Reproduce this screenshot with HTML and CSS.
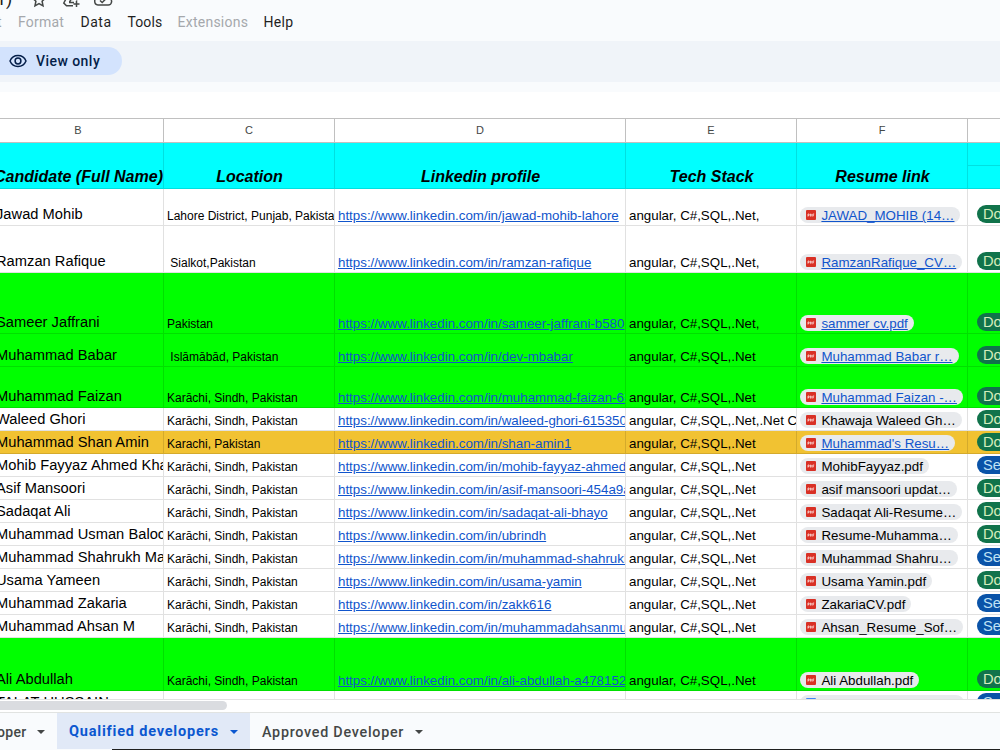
FILE: index.html
```html
<!DOCTYPE html>
<html lang="en">
	<head>
		<meta charset="utf-8">
		<meta name="viewport" content="width=device-width, initial-scale=1.0">
		<title>Qualified developers</title>
		<link rel="stylesheet" href="styles.css">
	</head>
	<body>
		<!-- icons shared by the rows -->
		<svg class="defs" width="0" height="0">
			<symbol id="pdf" viewBox="0 0 10 10">
				<rect width="10" height="10" rx="1" fill="#d93025"/>
				<path d="M2 6.6V4h1.1v1.4H2M4.4 4v2.2h.8V4zM6.8 6.6V4h1.4M6.8 5.2H8" fill="none" stroke="#fbdcd9" stroke-width=".8"/>
			</symbol>
			<symbol id="doc" viewBox="0 0 10 10">
				<rect width="10" height="10" rx="1" fill="#4285f4"/>
				<path d="M2 3h6M2 5h6M2 7h4" stroke="#fff" stroke-width="1"/>
			</symbol>
		</svg>

		<div class="titlebar">
			<span class="doc-name">1)</span>
			<svg class="star" width="16" height="16" viewBox="0 0 16 16"><path d="M8 1.6l1.9 4.1 4.5.5-3.3 3 .9 4.6L8 11.5l-4 2.3.9-4.6-3.3-3 4.5-.5z"/></svg>
			<svg class="move" width="20" height="16" viewBox="0 0 20 16"><path d="M11 12.7H4.5L1.8 10 6 2h6l3 5.5M7.5 9l2.5-4 1 2M7 9.5h5M14.5 8v6M11.5 11h6"/></svg>
			<svg class="cloud" width="20" height="16" viewBox="0 0 20 16"><path d="M5 13h10a3.4 3.4 0 0 0 .4-6.8A5.6 5.6 0 0 0 5 5.3 3.9 3.9 0 0 0 5 13zM7 8.5l2.2 2 4-4"/></svg>
		</div>
		<div class="menubar">
			<span class="off cut">t</span>
			<span class="off format">Format</span>
			<span class="data">Data</span>
			<span class="tools">Tools</span>
			<span class="off extensions">Extensions</span>
			<span class="help">Help</span>
		</div>
		<div class="toolbar">
			<div class="view-only">
				<svg width="18" height="14" viewBox="0 0 18 14"><path d="M1 7C2.5 3.500 5.500 1.500 9 1.500S15.500 3.500 17 7c-1.500 3.500-4.500 5.500-8 5.500S2.500 10.500 1 7z"/><circle cx="9" cy="7" r="2.900"/></svg>
				<span>View only</span>
			</div>
		</div>
		<div class="formula"></div>

		<div class="sheet">
			<div class="row letters">
				<div>B</div><div>C</div><div>D</div><div>E</div><div>F</div><div></div>
			</div>
			<div class="row heading">
				<div>Candidate (Full Name)</div><div>Location</div><div>Linkedin profile</div><div>Tech Stack</div><div>Resume link</div>
				<div class="split"><span></span></div>
			</div>
			<div class="row h37">
				<div class="name">Jawad Mohib</div>
				<div class="place">Lahore District, Punjab, Pakistan</div>
				<div class="link"><a>https://www.linkedin.com/in/jawad-mohib-lahore</a></div>
				<div class="tech">angular, C#,SQL,.Net,</div>
				<div class="resume"><span class="chip"><svg><use href="#pdf"/></svg><a>JAWAD_MOHIB (14…</a></span></div>
				<div class="status"><span class="done">Done</span></div>
			</div>
			<div class="row h47">
				<div class="name">Ramzan Rafique</div>
				<div class="place">&nbsp;Sialkot,Pakistan</div>
				<div class="link"><a>https://www.linkedin.com/in/ramzan-rafique</a></div>
				<div class="tech">angular, C#,SQL,.Net,</div>
				<div class="resume"><span class="chip"><svg><use href="#pdf"/></svg><a>RamzanRafique_CV…</a></span></div>
				<div class="status"><span class="done">Done</span></div>
			</div>
			<div class="row green h61">
				<div class="name">Sameer Jaffrani</div>
				<div class="place">Pakistan</div>
				<div class="link"><a>https://www.linkedin.com/in/sameer-jaffrani-b580</a></div>
				<div class="tech">angular, C#,SQL,.Net,</div>
				<div class="resume"><span class="chip"><svg><use href="#pdf"/></svg><a>sammer cv.pdf</a></span></div>
				<div class="status"><span class="done">Done</span></div>
			</div>
			<div class="row green h33">
				<div class="name">Muhammad Babar</div>
				<div class="place">&nbsp;Islāmābād, Pakistan</div>
				<div class="link"><a>https://www.linkedin.com/in/dev-mbabar</a></div>
				<div class="tech">angular, C#,SQL,.Net</div>
				<div class="resume"><span class="chip"><svg><use href="#pdf"/></svg><a>Muhammad Babar r…</a></span></div>
				<div class="status"><span class="done">Done</span></div>
			</div>
			<div class="row green h41">
				<div class="name">Muhammad Faizan</div>
				<div class="place">Karāchi, Sindh, Pakistan</div>
				<div class="link"><a>https://www.linkedin.com/in/muhammad-faizan-68</a></div>
				<div class="tech">angular, C#,SQL,.Net</div>
				<div class="resume"><span class="chip"><svg><use href="#pdf"/></svg><a>Muhammad Faizan -…</a></span></div>
				<div class="status"><span class="done">Done</span></div>
			</div>
			<div class="row">
				<div class="name">Waleed Ghori</div>
				<div class="place">Karāchi, Sindh, Pakistan</div>
				<div class="link"><a>https://www.linkedin.com/in/waleed-ghori-615350</a></div>
				<div class="tech">angular, C#,SQL,.Net,.Net Core</div>
				<div class="resume"><span class="chip"><svg><use href="#pdf"/></svg>Khawaja Waleed Gh…</span></div>
				<div class="status"><span class="done">Done</span></div>
			</div>
			<div class="row amber">
				<div class="name">Muhammad Shan Amin</div>
				<div class="place">Karachi, Pakistan</div>
				<div class="link"><a>https://www.linkedin.com/in/shan-amin1</a></div>
				<div class="tech">angular, C#,SQL,.Net</div>
				<div class="resume"><span class="chip"><svg><use href="#pdf"/></svg><a>Muhammad's Resu…</a></span></div>
				<div class="status"><span class="done">Done</span></div>
			</div>
			<div class="row">
				<div class="name">Mohib Fayyaz Ahmed Khan</div>
				<div class="place">Karāchi, Sindh, Pakistan</div>
				<div class="link"><a>https://www.linkedin.com/in/mohib-fayyaz-ahmed</a></div>
				<div class="tech">angular, C#,SQL,.Net</div>
				<div class="resume"><span class="chip"><svg><use href="#pdf"/></svg>MohibFayyaz.pdf</span></div>
				<div class="status"><span class="sent">Sent</span></div>
			</div>
			<div class="row">
				<div class="name">Asif Mansoori</div>
				<div class="place">Karāchi, Sindh, Pakistan</div>
				<div class="link"><a>https://www.linkedin.com/in/asif-mansoori-454a9a</a></div>
				<div class="tech">angular, C#,SQL,.Net</div>
				<div class="resume"><span class="chip"><svg><use href="#pdf"/></svg>asif mansoori updat…</span></div>
				<div class="status"><span class="done">Done</span></div>
			</div>
			<div class="row">
				<div class="name">Sadaqat Ali</div>
				<div class="place">Karāchi, Sindh, Pakistan</div>
				<div class="link"><a>https://www.linkedin.com/in/sadaqat-ali-bhayo</a></div>
				<div class="tech">angular, C#,SQL,.Net</div>
				<div class="resume"><span class="chip"><svg><use href="#pdf"/></svg>Sadaqat Ali-Resume…</span></div>
				<div class="status"><span class="done">Done</span></div>
			</div>
			<div class="row">
				<div class="name">Muhammad Usman Baloch</div>
				<div class="place">Karāchi, Sindh, Pakistan</div>
				<div class="link"><a>https://www.linkedin.com/in/ubrindh</a></div>
				<div class="tech">angular, C#,SQL,.Net</div>
				<div class="resume"><span class="chip"><svg><use href="#pdf"/></svg>Resume-Muhamma…</span></div>
				<div class="status"><span class="done">Done</span></div>
			</div>
			<div class="row">
				<div class="name">Muhammad Shahrukh Malik</div>
				<div class="place">Karāchi, Sindh, Pakistan</div>
				<div class="link"><a>https://www.linkedin.com/in/muhammad-shahrukh</a></div>
				<div class="tech">angular, C#,SQL,.Net</div>
				<div class="resume"><span class="chip"><svg><use href="#pdf"/></svg>Muhammad Shahru…</span></div>
				<div class="status"><span class="sent">Sent</span></div>
			</div>
			<div class="row">
				<div class="name">Usama Yameen</div>
				<div class="place">Karāchi, Sindh, Pakistan</div>
				<div class="link"><a>https://www.linkedin.com/in/usama-yamin</a></div>
				<div class="tech">angular, C#,SQL,.Net</div>
				<div class="resume"><span class="chip"><svg><use href="#pdf"/></svg>Usama Yamin.pdf</span></div>
				<div class="status"><span class="done">Done</span></div>
			</div>
			<div class="row">
				<div class="name">Muhammad Zakaria</div>
				<div class="place">Karāchi, Sindh, Pakistan</div>
				<div class="link"><a>https://www.linkedin.com/in/zakk616</a></div>
				<div class="tech">angular, C#,SQL,.Net</div>
				<div class="resume"><span class="chip"><svg><use href="#pdf"/></svg>ZakariaCV.pdf</span></div>
				<div class="status"><span class="sent">Sent</span></div>
			</div>
			<div class="row">
				<div class="name">Muhammad Ahsan M</div>
				<div class="place">Karāchi, Sindh, Pakistan</div>
				<div class="link"><a>https://www.linkedin.com/in/muhammadahsanmu</a></div>
				<div class="tech">angular, C#,SQL,.Net</div>
				<div class="resume"><span class="chip"><svg><use href="#pdf"/></svg>Ahsan_Resume_Sof…</span></div>
				<div class="status"><span class="sent">Sent</span></div>
			</div>
			<div class="row green h53">
				<div class="name">Ali Abdullah</div>
				<div class="place">Karāchi, Sindh, Pakistan</div>
				<div class="link"><a>https://www.linkedin.com/in/ali-abdullah-a478152</a></div>
				<div class="tech">angular, C#,SQL,.Net</div>
				<div class="resume"><span class="chip"><svg><use href="#pdf"/></svg>Ali Abdullah.pdf</span></div>
				<div class="status"><span class="done">Done</span></div>
			</div>
			<div class="row">
				<div class="name">TALAT HUSSAIN</div>
				<div class="place"></div>
				<div class="link"><a>https://www.linkedin.com/in/talat-hussain-241877</a></div>
				<div class="tech">angular, C#,SQL,.Net</div>
				<div class="resume"><span class="chip"><svg><use href="#doc"/></svg>Resume of Talat Hus…</span></div>
				<div class="status"><span class="sent">Sent</span></div>
			</div>
		</div>

		<div class="scroll"><div class="thumb"></div></div>

		<div class="tabs">
			<div class="tab first"><span>oper</span><i></i></div>
			<div class="tab active"><span>Qualified developers</span><i></i></div>
			<div class="tab last"><span>Approved Developer</span><i></i></div>
		</div>
		<div class="edge"></div>
	</body>
</html>
```
FILE: styles.css
```css
* {
	margin: 0;
	padding: 0;
	box-sizing: border-box;
}
body {
	width: 1000px;
	height: 750px;
	overflow: hidden;
	background-color: #f9fbfd;
	font-family: "Liberation Sans", Arial, sans-serif;
	color: #000;
}
.defs {
	position: absolute;
}

/* top bars */
.titlebar {
	display: flex;
	height: 10px;
	overflow: hidden;
	font-family: Roboto, sans-serif;
}
.titlebar svg {
	flex: none;
	margin-top: -8px;
	fill: none;
	stroke: #444746;
	stroke-width: 1.5;
}
.doc-name {
	width: 31px;
	margin-left: -4px;
	margin-top: -11px;
	font-size: 18px;
	line-height: 20px;
	color: #1f1f1f;
}
.titlebar .star {
	margin-left: 4px;
}
.titlebar .move {
	margin-left: 15px;
	margin-top: -7px;
}
.titlebar .cloud {
	margin-left: 11px;
}
.menubar {
	display: flex;
	height: 31px;
	font-family: Roboto, sans-serif;
	font-size: 14px;
	line-height: 25px;
	color: #1f1f1f;
	white-space: nowrap;
}
.menubar span {
	flex: none;
}
.menubar .off {
	color: #a5a8ac;
}
.menubar .cut {
	width: 21px;
	margin-left: -3px;
}
.format {
	width: 62.5px;
	letter-spacing: 0.2px;
}
.data {
	width: 47px;
	letter-spacing: 0.5px;
}
.tools {
	width: 50px;
	letter-spacing: 0.1px;
}
.extensions {
	width: 86px;
	letter-spacing: 0.25px;
}
.help {
	letter-spacing: 0.3px;
}
.toolbar {
	height: 41px;
	padding-top: 6px;
	background-color: #f0f4f9;
}
.view-only {
	display: flex;
	align-items: center;
	gap: 9px;
	width: 136px;
	height: 28px;
	margin-left: -14px;
	padding-left: 23px;
	border-radius: 14px;
	background-color: #d3e3fd;
	color: #041e49;
	font: 500 14px/28px Roboto, sans-serif;
	letter-spacing: 0.45px;
}
.view-only svg {
	fill: none;
	stroke: #041e49;
	stroke-width: 1.5;
}
.formula {
	height: 36px;
	border-top: 10px solid #f9fbfd;
	background-color: #fff;
}

/* grid */
.sheet {
	height: 581px;
	overflow: hidden;
	border-top: 1px solid #c0c0c0;
	background-color: #fff;
}
.row {
	display: grid;
	grid-template-columns: 171px 171px 291px 171px 171px 171px;
	width: 1146px;
	height: 23px;
	margin-left: -7px;
}
.row > div {
	display: flex;
	align-items: flex-end;
	min-width: 0;
	overflow: hidden;
	border-right: 1px solid #e1e1e1;
	border-bottom: 1px solid #e1e1e1;
	white-space: nowrap;
}
.row.letters {
	height: 24px;
}
.letters > div {
	align-items: center;
	justify-content: center;
	padding: 0 0 2px 0;
	border-color: #c0c0c0;
	font-size: 11px;
	color: #444746;
}
.row.heading {
	height: 46px;
}
.heading > div {
	justify-content: center;
	border-color: #00e0e0;
	background-color: #00ffff;
	font-size: 16px;
	font-weight: bold;
	font-style: italic;
	line-height: 18px;
	padding: 0 0 2px 1px;
}
.heading > .split {
	display: block;
	padding: 0;
}
.split span {
	display: block;
	height: 23px;
	border-bottom: 1px solid #00e0e0;
}
.h37 { height: 37px; }
.h47 { height: 47px; }
.h61 { height: 61px; }
.h33 { height: 33px; }
.h41 { height: 41px; }
.h53 { height: 53px; }
.green > div {
	background-color: #00ff00;
	border-color: #00e000;
}
.amber > div {
	background-color: #f1c232;
	border-color: #d4aa2c;
}
.name {
	padding: 0 0 2px 3px;
	font-size: 14.67px;
	line-height: 17px;
	letter-spacing: 0.03px;
}
.place {
	padding: 0 0 2px 3px;
	font-size: 12px;
	line-height: 14px;
}
.link,
.tech {
	padding: 0 0 1px 3px;
	font-size: 13.33px;
	line-height: 16px;
}
.row a {
	color: #1155cc;
	text-decoration: underline;
}
.resume {
	padding: 0 0 2px 3px;
}
.chip {
	display: flex;
	align-items: flex-start;
	height: 16px;
	padding: 1px 6px 0 6px;
	border-radius: 8px;
	background-color: #e8eaed;
	font-size: 13.33px;
	line-height: 16px;
}
.chip svg {
	width: 10px;
	height: 10px;
	margin-top: 2px;
	margin-right: 5.4px;
}
.status {
	padding: 0 0 2px 9px;
}
.status span {
	height: 18px;
	padding: 0 6px;
	border-radius: 9px;
	font-size: 14.67px;
	line-height: 18px;
}
.done {
	background-color: #11734b;
	color: #d4edbc;
}
.sent {
	background-color: #0a53a8;
	color: #bfe1f6;
}

/* bottom */
.scroll {
	height: 14px;
	padding-top: 1px;
	border-top: 1px solid #e1e1e1;
	border-bottom: 1px solid #e1e3e1;
	background-color: #fff;
}
.thumb {
	width: 237px;
	height: 9px;
	margin-left: -10px;
	border-radius: 5px;
	background-color: #dadce0;
}
.tabs {
	display: flex;
	height: 36px;
	font: 500 14px/38px Roboto, sans-serif;
	color: #444746;
}
.tab {
	display: flex;
	align-items: center;
	padding-top: 2px;
	white-space: nowrap;
}
.tab i {
	border: 4px solid transparent;
	border-top-color: currentColor;
	border-bottom: 0;
}
.first {
	width: 57px;
	gap: 11px;
	letter-spacing: 0.3px;
}
.first span {
	margin-left: -3px;
}
.active {
	width: 193px;
	padding-left: 12px;
	gap: 11px;
	background-color: #e1e9f7;
	color: #0b57d0;
	font-size: 14.5px;
	font-weight: bold;
	letter-spacing: 0.8px;
}
.last {
	padding-left: 12px;
	gap: 11px;
	font-size: 14.3px;
	letter-spacing: 0.75px;
}
.edge {
	height: 1px;
	margin-left: 112px;
	background-color: #1f1f1f;
}
```
